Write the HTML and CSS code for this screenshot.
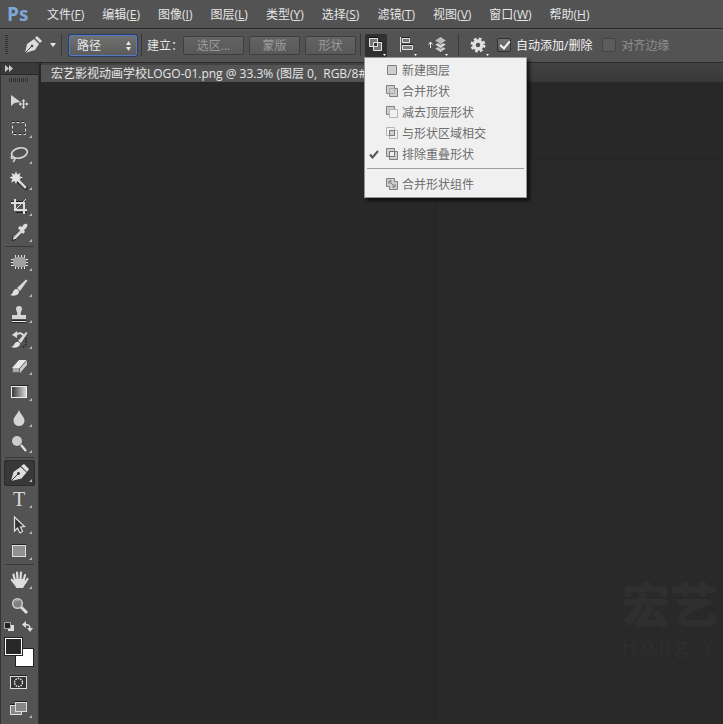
FILE: index.html
```
<!DOCTYPE html>
<html lang="zh-CN">
<head>
    <meta charset="UTF-8">
    <meta name="viewport" content="width=device-width, initial-scale=1.0">
    <title>Photoshop</title>
    <link rel="stylesheet" href="styles.css">
</head>
<body>
<header class="menubar">
    <span class="logo">Ps</span>
    <nav class="menus">
        <a href="#">文件(<u>F</u>)</a>
        <a href="#">编辑(<u>E</u>)</a>
        <a href="#">图像(<u>I</u>)</a>
        <a href="#">图层(<u>L</u>)</a>
        <a href="#">类型(<u>Y</u>)</a>
        <a href="#">选择(<u>S</u>)</a>
        <a href="#">滤镜(<u>T</u>)</a>
        <a href="#">视图(<u>V</u>)</a>
        <a href="#">窗口(<u>W</u>)</a>
        <a href="#">帮助(<u>H</u>)</a>
    </nav>
</header>

<div class="options">
    <span class="grip"></span>
    <button type="button" class="preset" aria-label="钢笔">
        <svg width="34" height="20" viewBox="0 0 34 20">
            <path d="M1 18 L3 9 L10 4 L15 9 L11 15 Z" fill="#dcdcdc"/>
            <path d="M11 3 L13 1 L18 6 L16 8 Z" fill="#dcdcdc"/>
            <path d="M1 18 L8 11" stroke="#444" stroke-width="1"/>
            <circle cx="8" cy="11" r="1.3" fill="#444"/>
            <path d="M26 8 h6 l-3 4z" fill="#e8e8e8"/>
        </svg>
    </button>
    <span class="divider"></span>
    <div class="mode">
        <select aria-label="工具模式">
            <option>路径</option>
            <option>形状</option>
            <option>像素</option>
        </select>
        <svg width="7" height="10" viewBox="0 0 7 10"><path d="M1 4 L3.500 0 L6 4z M1 6 h5 L3.500 10z" fill="#e6e6e6"/></svg>
    </div>
    <span class="divider"></span>
    <span class="caption">建立：</span>
    <div class="makers">
        <button type="button" class="wide" disabled>选区...</button>
        <button type="button" disabled>蒙版</button>
        <button type="button" disabled>形状</button>
    </div>
    <span class="divider"></span>
    <div class="combine">
        <button type="button" class="icon-btn pressed" aria-label="路径操作">
            <svg width="22" height="23" viewBox="0 0 22 23">
                <path d="M4 4h9v4h4v9h-9v-4h-4z" fill="#777"/>
                <path d="M4.500 4.500h8v8h-8z M8.500 8.500h8v8h-8z" fill="none" stroke="#e2e2e2"/>
                <path d="M9 9h3v3h-3z" fill="#303030"/>
                <path d="M4 3.500h9M13 7.500h4" stroke="#111"/>
                <path d="M18 20h3l-1.500 2z" fill="#fff"/>
            </svg>
        </button>
        <ul class="popup">
            <li><button type="button"><i></i><svg width="14" height="14" viewBox="0 0 14 14"><path d="M2.500 2.500h9v9h-9z" fill="#cfcfcf" stroke="#808080"/></svg>新建图层</button></li>
            <li><button type="button"><i></i><svg width="14" height="14" viewBox="0 0 14 14"><path d="M1.500 1.500h8v3h3v8h-8v-3h-3z" fill="#cfcfcf" stroke="#808080"/><path d="M4.500 4.500h5v5h-5z" fill="none" stroke="#aaa"/></svg>合并形状</button></li>
            <li><button type="button"><i></i><svg width="14" height="14" viewBox="0 0 14 14"><path d="M1.500 1.500h8v3h-5v5h-3z" fill="#cfcfcf" stroke="#808080"/><path d="M4.500 4.500h8v8h-8z" fill="#f0f0f0" stroke="#b5b5b5"/></svg>减去顶层形状</button></li>
            <li><button type="button"><i></i><svg width="14" height="14" viewBox="0 0 14 14"><path d="M1.500 1.500h8v8h-8z M4.500 4.500h8v8h-8z" fill="none" stroke="#b5b5b5"/><path d="M4.500 4.500h5v5h-5z" fill="#cfcfcf" stroke="#777"/></svg>与形状区域相交</button></li>
            <li><button type="button"><i><svg width="10" height="9" viewBox="0 0 10 9"><path d="M1 4.500 L3.500 7.500 L9 1" fill="none" stroke="#555" stroke-width="2"/></svg></i><svg width="14" height="14" viewBox="0 0 14 14"><path d="M1.500 1.500h8v8h-8z M4.500 4.500h8v8h-8z" fill="#cfcfcf" stroke="#808080"/><path d="M4.500 4.500h5v5h-5z" fill="#f0f0f0" stroke="#777"/></svg>排除重叠形状</button></li>
            <li class="last"><button type="button"><i></i><svg width="14" height="14" viewBox="0 0 14 14"><path d="M1.500 1.500h8v3h3v8h-8v-3h-3z" fill="#cfcfcf" stroke="#808080"/><path d="M4 4l6 6M4 7v-3h3M10 7v3h-3" fill="none" stroke="#777"/></svg>合并形状组件</button></li>
        </ul>
    </div>
    <button type="button" class="icon-btn" aria-label="路径对齐方式">
        <svg width="22" height="23" viewBox="0 0 22 23">
            <path d="M3.500 3v15" stroke="#e2e2e2"/>
            <path d="M5.500 4.500h7v4h-7z M5.500 11.500h10v4h-10z" fill="#777" stroke="#e2e2e2"/>
            <path d="M5 3.500h8M5 10.500h11" stroke="#222"/>
            <path d="M17 20h3l-1.500 2z" fill="#fff"/>
        </svg>
    </button>
    <button type="button" class="icon-btn" aria-label="路径排列方式">
        <svg width="22" height="23" viewBox="0 0 22 23">
            <path d="M3.500 8v6M1.500 10.500l2-2.500l2 2.500" fill="none" stroke="#eee"/>
            <path d="M7.500 14.500l6-3l6 3l-6 4z" fill="#c8c8c8" stroke="#444" stroke-width=".700"/>
            <path d="M7.500 10.500l6-3l6 3l-6 4z" fill="#d5d5d5" stroke="#444" stroke-width=".700"/>
            <path d="M7.500 6.500l6-4l6 4l-6 4z" fill="#bcbcbc" stroke="#444" stroke-width=".700"/>
            <path d="M18 20h3l-1.500 2z" fill="#fff"/>
        </svg>
    </button>
    <span class="divider gear-divider"></span>
    <button type="button" class="icon-btn" aria-label="设置">
        <svg width="22" height="23" viewBox="0 0 22 23">
            <circle cx="10" cy="11" r="4" fill="none" stroke="#e0e0e0" stroke-width="3.500"/>
            <circle cx="10" cy="11" r="6.300" fill="none" stroke="#e0e0e0" stroke-width="2.400" stroke-dasharray="2.700 2.248"/>
            <path d="M18 20h3l-1.500 2z" fill="#fff"/>
        </svg>
    </button>
    <label class="check"><input type="checkbox" checked>自动添加/删除</label>
    <label class="check off"><input type="checkbox" disabled>对齐边缘</label>
</div>

<main class="workspace">
    <aside class="toolbox">
        <div class="toolbox-head">
            <svg width="8" height="7" viewBox="0 0 8 7"><path d="M0 0l4 3.500l-4 3.500z M4 0l4 3.500l-4 3.500z" fill="#ccc"/></svg>
        </div>
        <div class="toolbox-grip"></div>
        <div class="group">
            <button type="button" class="tool" aria-label="移动"><svg width="31" height="26" viewBox="0 0 31 26">
                <path d="M7 5v11l3.500-3l6-1z" fill="#d8d8d8"/>
                <path d="M19.500 10v8M15.500 14h8" stroke="#d8d8d8" stroke-width="1.200"/>
                <path d="M17.500 11.500l2-2.500l2 2.500z M17.500 16.500l2 2.500l2-2.500z M17 12l-2.500 2l2.500 2z M22 12l2.500 2l-2.500 2z" fill="#d8d8d8"/>
            </svg></button>
            <button type="button" class="tool more" aria-label="矩形选框"><svg width="31" height="26" viewBox="0 0 31 26">
                <path d="M8.500 5.500h13v12h-13z" fill="none" stroke="#222" stroke-dasharray="3 2" stroke-dashoffset="1"/>
                <path d="M8.500 6.500h13v12h-13z" fill="none" stroke="#dedede" stroke-dasharray="3 2" stroke-dashoffset="1"/>
            </svg></button>
            <button type="button" class="tool more" aria-label="套索"><svg width="31" height="26" viewBox="0 0 31 26">
                <ellipse cx="15.500" cy="11" rx="8" ry="5" transform="rotate(-14 15.500 11)" fill="none" stroke="#d5d5d5" stroke-width="1.700"/>
                <path d="M8 14c-2 2 0 3 2 2c2 0 1 2-1 4" fill="none" stroke="#d5d5d5" stroke-width="1.400"/>
            </svg></button>
            <button type="button" class="tool more" aria-label="魔棒"><svg width="31" height="26" viewBox="0 0 31 26">
                <path d="M13 12L23 21" stroke="#222" stroke-width="4"/>
                <path d="M13 11L22 20" stroke="#d5d5d5" stroke-width="2.500"/>
                <path d="M12 3l1.200 3.500l3.300-1.500l-1 3.200l3.500 1.300l-3.500 1.500l1 3l-3.300-1l-1.200 3l-1.500-3l-3.500 1.500l1.500-3.500l-3.200-1.500l3.500-1.300l-1.500-3.200l3.500 1.500z" fill="#e2e2e2"/>
            </svg></button>
            <button type="button" class="tool more" aria-label="裁剪"><svg width="31" height="26" viewBox="0 0 31 26">
                <path d="M7 7.500h13M12 18.500h11" fill="none" stroke="#222"/>
                <path d="M7 9h13v11M11 5v11h12" fill="none" stroke="#ddd" stroke-width="2"/>
                <path d="M12 15L22 5" stroke="#ddd"/>
            </svg></button>
            <button type="button" class="tool more" aria-label="吸管"><svg width="31" height="26" viewBox="0 0 31 26">
                <path d="M8 20.500l1-4l8-8l3 3l-8 8z" fill="#bdbdbd" stroke="#222"/>
                <path d="M14 8l2-2l2 1c1-3 4-4 5-3s0 4-3 6l1 2l-2 2z" fill="#ddd"/>
                <path d="M10 19l7-7" stroke="#eee"/>
            </svg></button>
        </div>
        <div class="group">
            <button type="button" class="tool more" aria-label="修补"><svg width="31" height="26" viewBox="0 0 31 26">
                <path d="M11.500 6v14M14.500 6v14M17.500 6v14M20.500 6v14M7 10.500h17M7 13.500h17M7 16.500h17" stroke="#e2e2e2"/>
                <rect x="9" y="8" width="13" height="10" rx="4" fill="#a0a0a0"/>
            </svg></button>
            <button type="button" class="tool more" aria-label="画笔"><svg width="31" height="26" viewBox="0 0 31 26">
                <path d="M13 13L22 4.500l1.500 1L16 16z" fill="#d8d8d8"/>
                <path d="M6 20c4-1 2-5 6-6c3 0 4 3 2 5c-2 2-5 2-8 1z" fill="#e2e2e2"/>
            </svg></button>
            <button type="button" class="tool more" aria-label="仿制图章"><svg width="31" height="26" viewBox="0 0 31 26">
                <path d="M13 14c1-3-1-4-1-6a2.800 2.800 0 0 1 6 0c0 2-2 3-1 6h5v4H8v-4z" fill="#d5d5d5"/>
                <path d="M8 20.500h14" stroke="#eee"/><path d="M8 19.500h14M8 21.500h14" stroke="#222"/>
            </svg></button>
            <button type="button" class="tool more" aria-label="历史记录画笔"><svg width="31" height="26" viewBox="0 0 31 26">
                <path d="M12 8c3-3 7-2 8 2" fill="none" stroke="#ddd" stroke-width="1.800"/>
                <path d="M13 4v7l-5-3z" fill="#ddd"/>
                <path d="M14 14L22 5l1.500 1L17 16z" fill="#d8d8d8"/>
                <path d="M7 20c4-1 3-5 6-5c3 0 4 2 2 4c-2 2-5 2-8 1z" fill="#e2e2e2"/>
                <path d="M22 11v6c-1 3-3 3-5 3" fill="none" stroke="#222" stroke-width="1.500" stroke-dasharray="1.500 1.500"/>
            </svg></button>
            <button type="button" class="tool more" aria-label="橡皮擦"><svg width="31" height="26" viewBox="0 0 31 26">
                <path d="M8 15l7-8h8l-7 8z" fill="#e8e8e8"/>
                <path d="M8 15h8v5H8z" fill="#aaa"/>
                <path d="M16 15l7-8v5l-7 8z" fill="#ccc"/>
                <path d="M8.500 15v4.500h7v-4.500M16 15l7-8" fill="none" stroke="#444" stroke-width=".700"/>
            </svg></button>
            <button type="button" class="tool more" aria-label="渐变"><svg width="31" height="26" viewBox="0 0 31 26">
                <defs><linearGradient id="ramp"><stop offset="0" stop-color="#333"/><stop offset="1" stop-color="#ddd"/></linearGradient></defs>
                <path d="M7 6.500h17" stroke="#222"/>
                <rect x="7.500" y="7.500" width="15" height="11" fill="url(#ramp)" stroke="#eee"/>
            </svg></button>
            <button type="button" class="tool more" aria-label="模糊"><svg width="31" height="26" viewBox="0 0 31 26">
                <path d="M15 5c2 5 5.500 7 5.500 10.500a5.500 5.500 0 0 1-11 0C9.500 12 13 10 15 5z" fill="#d5d5d5"/>
            </svg></button>
            <button type="button" class="tool more" aria-label="减淡"><svg width="31" height="26" viewBox="0 0 31 26">
                <path d="M17 14l5 6" stroke="#e2e2e2" stroke-width="2.300"/>
                <circle cx="13" cy="10" r="5" fill="#ccc"/>
            </svg></button>
        </div>
        <div class="group">
            <button type="button" class="tool more current" aria-label="钢笔"><svg width="31" height="26" viewBox="0 0 31 26">
                <path d="M7 21l2.500-9l7-5l6 5.500l-5 6z" fill="#dedede"/>
                <path d="M17 6l3-2l5 5l-2 3z" fill="#dedede"/>
                <path d="M7 21l7-7" stroke="#333"/><circle cx="14.500" cy="13.500" r="1.400" fill="#333"/>
            </svg></button>
            <button type="button" class="tool more type" aria-label="横排文字"><span>T</span></button>
            <button type="button" class="tool more" aria-label="路径选择"><svg width="31" height="26" viewBox="0 0 31 26">
                <path d="M10.500 5v14l3-3l2.500 5l2.500-1.500l-2-4.500l4-.500z" fill="#333" stroke="#e2e2e2" stroke-width="1.200"/>
            </svg></button>
            <button type="button" class="tool more" aria-label="矩形"><svg width="31" height="26" viewBox="0 0 31 26">
                <path d="M8 6.500h14" stroke="#222"/>
                <rect x="8.500" y="7.500" width="13" height="11" fill="#919191" stroke="#ddd"/>
            </svg></button>
        </div>
        <div class="group">
            <button type="button" class="tool more" aria-label="抓手"><svg width="31" height="26" viewBox="0 0 31 26">
                <path d="M12 20L7 13.500c-1-2 1-2 2-1l2 2z" fill="#ddd"/>
                <path d="M11 14L9.500 7.500M13.500 12L13 5.500M16.500 12L17 5.500M19.500 14L21 8M21 16l2.500-4" stroke="#ddd" stroke-width="2.200" stroke-linecap="round"/>
                <path d="M10 12h10l2 4l-3 5h-7z" fill="#ddd"/>
            </svg></button>
            <button type="button" class="tool" aria-label="缩放"><svg width="31" height="26" viewBox="0 0 31 26">
                <path d="M17 14l6 6" stroke="#ddd" stroke-width="3"/>
                <circle cx="13.500" cy="10.500" r="4.800" fill="#808080" stroke="#ccc" stroke-width="1.500"/>
                <path d="M11 9c1-2 3-2 4-1" fill="none" stroke="#aaa"/>
            </svg></button>
        </div>
        <div class="colour-row">
            <button type="button" aria-label="默认颜色"><svg width="11" height="11" viewBox="0 0 11 11"><path d="M4 4h6v6H4z" fill="#ddd"/><path d="M.500 1.500h6v6h-6z" fill="#222" stroke="#aaa"/></svg></button>
            <button type="button" aria-label="切换颜色"><svg width="11" height="11" viewBox="0 0 11 11"><path d="M3 3.500c4 0 5 1 5 4.500" fill="none" stroke="#ddd" stroke-width="1.500"/><path d="M4 0v7l-4-3.500z M5 7h6l-3 4z" fill="#ddd"/></svg></button>
        </div>
        <div class="swatches">
            <button type="button" class="back" aria-label="背景色"></button>
            <button type="button" class="front" aria-label="前景色"></button>
        </div>
        <button type="button" class="tool" aria-label="快速蒙版"><svg width="31" height="26" viewBox="0 0 31 26">
            <path d="M6 5.500h17" stroke="#222"/>
            <rect x="6.500" y="6.500" width="16" height="12" fill="#333" stroke="#ddd"/>
            <circle cx="14.500" cy="12.500" r="4" fill="none" stroke="#eee" stroke-width="1.400" stroke-dasharray="1.500 1.012"/>
        </svg></button>
        <button type="button" class="tool more" aria-label="屏幕模式"><svg width="31" height="26" viewBox="0 0 31 26">
            <path d="M6 8.500h5M11 5.500h12" stroke="#222"/>
            <rect x="6.500" y="9.500" width="11" height="9" fill="#888" stroke="#ddd"/>
            <rect x="11.500" y="6.500" width="11" height="9" fill="#888" stroke="#ddd"/>
        </svg></button>
    </aside>
    <section class="document">
        <div class="tabs">
            <a href="#" class="tab">宏艺影视动画学校LOGO-01.png @ 33.3% (图层 0, &nbsp;RGB/8#)</a>
        </div>
        <div class="canvas">
            <div class="page">
                <p class="mark">宏艺</p>
                <p class="mark-latin"><span>H</span><span>o</span><span>n</span><span>g</span><span class="word">Y</span></p>
            </div>
        </div>
    </section>
</main>
</body>
</html>
```
FILE: styles.css
```
* {
    box-sizing: border-box;
}

body {
    margin: 0;
    height: 100vh;
    display: flex;
    flex-direction: column;
    overflow: hidden;
    background-color: #282828;
    color: #e6e6e6;
    font-family: "Open Sans", "Noto Sans CJK SC", sans-serif;
    font-size: 12px;
}

button,
select,
input {
    margin: 0;
    padding: 0;
    border: none;
    background: none;
    color: inherit;
    font: inherit;
}

svg {
    display: block;
    flex: none;
}

a {
    color: inherit;
    text-decoration: none;
    white-space: nowrap;
}

/* menu bar */
.menubar {
    flex: none;
    display: flex;
    align-items: center;
    height: 29px;
    padding-left: 7px;
    background-color: #535353;
    border-bottom: 1px solid #282828;
}

.logo {
    width: 40px;
    color: #7ba7d9;
    font-family: "Open Sans", sans-serif;
    font-size: 19px;
    font-weight: bold;
    line-height: 28px;
}

.menus {
    display: flex;
    gap: 18px;
}

/* options bar */
.options {
    flex: none;
    display: flex;
    align-items: center;
    height: 34px;
    padding: 0 0 2px 5px;
    background-color: #535353;
    border-top: 1px solid #5e5e5e;
    border-bottom: 1px solid #282828;
    white-space: nowrap;
}

.grip {
    width: 3px;
    height: 20px;
    margin-right: 16px;
    background: repeating-linear-gradient(#333 0 1px, #535353 1px 2px);
}

.divider {
    width: 1px;
    height: 22px;
    background-color: #383838;
}

.preset {
    width: 37px;
}

.mode {
    position: relative;
    margin: 0 4px 0 7px;
}

.mode select {
    display: block;
    appearance: none;
    width: 68px;
    height: 21px;
    padding-left: 7px;
    border: 1px solid #5579c6;
    border-radius: 2px;
    background: linear-gradient(#707070, #5c5c5c);
    box-shadow: 0 0 0 1px #2c3c5c;
}

.mode svg {
    position: absolute;
    right: 5px;
    top: 6px;
    pointer-events: none;
}

.caption {
    width: 41px;
    padding-left: 5px;
}

.makers {
    display: flex;
    gap: 5px;
    margin-right: 4px;
}

.makers button {
    width: 51px;
    height: 19px;
    border: 1px solid #3e3e3e;
    border-radius: 2px;
    background: linear-gradient(#636363, #595959);
    color: #9a9a9a;
    line-height: 17px;
}

.makers .wide {
    width: 61px;
}

.icon-btn {
    display: block;
    width: 22px;
    height: 23px;
}

.pressed {
    border-radius: 2px;
    background-color: #303030;
}

.combine {
    position: relative;
    margin: 0 10px 0 4px;
}

.icon-btn + .icon-btn {
    margin-left: 8px;
}

.gear-divider {
    margin: 0 9px;
}

.check {
    display: flex;
    align-items: center;
    gap: 5px;
    margin-left: 7px;
    color: #f4f4f4;
}

.check input {
    appearance: none;
    position: relative;
    width: 14px;
    height: 14px;
    border: 1px solid #303030;
    border-radius: 2px;
    background: linear-gradient(#707070, #606060);
}

.check input:checked::after {
    content: "";
    position: absolute;
    left: 4px;
    top: 0;
    width: 4px;
    height: 8px;
    border: solid #f4f4f4;
    border-width: 0 2px 2px 0;
    transform: rotate(40deg);
}

.check.off {
    margin-left: 10px;
    color: #8e8e8e;
}

.off input {
    border-color: #444;
    background: #5c5c5c;
}

/* path operations popup */
.popup {
    position: absolute;
    z-index: 2;
    left: -1px;
    top: 100%;
    width: 163px;
    margin: 0;
    padding: 2px;
    list-style: none;
    background-color: #f0f0f0;
    border: 1px solid #979797;
    box-shadow: 3px 3px 3px rgba(0, 0, 0, .6);
    color: #6d6d6d;
}

.popup button {
    display: flex;
    align-items: center;
    width: 100%;
    height: 21px;
}

.popup i {
    width: 15px;
    padding-left: 2px;
    margin-right: 3px;
}

.popup button > svg {
    margin-right: 3px;
}

.popup .last {
    margin-top: 3px;
    padding-top: 5px;
    border-top: 1px solid #a0a0a0;
}

/* toolbox */
.workspace {
    flex: 1;
    display: flex;
    min-height: 0;
}

.toolbox {
    flex: none;
    width: 39px;
    background-color: #535353;
    border-left: 1px solid #333;
    border-right: 1px solid #333;
    overflow: hidden;
}

.toolbox-head {
    height: 12px;
    padding: 2px 4px;
    background-color: #3a3a3a;
    border-bottom: 1px solid #282828;
}

.toolbox-grip {
    width: 20px;
    height: 4px;
    margin: 3px 8px 8px;
    background: repeating-linear-gradient(90deg, #333 0 1px, #535353 1px 2px);
}

.group {
    margin: 0 3px;
}

.group + .group {
    padding-top: 3px;
    background: linear-gradient(#383838, #383838) 1px 0 / 29px 1px no-repeat;
}

.tool {
    display: block;
    position: relative;
    width: 31px;
    height: 26px;
}

.toolbox > .tool {
    margin-left: 3px;
}

.more::after {
    content: "";
    position: absolute;
    right: 3px;
    bottom: 4px;
    border-top: 3px solid transparent;
    border-right: 3px solid #b8b8b8;
}

.current {
    border-radius: 3px;
    background-color: #383838;
    box-shadow: inset 0 0 0 1px #2a2a2a;
}

.type span {
    display: block;
    width: 30px;
    color: #dcdcdc;
    font-family: "Liberation Serif", serif;
    font-size: 20px;
    line-height: 24px;
}

.colour-row {
    display: flex;
    gap: 7px;
    padding: 2px 3px 0;
    height: 18px;
}

.colour-row button {
    width: 11px;
    height: 11px;
}

.swatches {
    position: relative;
    width: 30px;
    height: 30px;
    margin: 0 0 3px 3px;
}

.swatches button {
    position: absolute;
    width: 19px;
    height: 19px;
    border: 1px solid #222;
}

.swatches .front {
    left: 0;
    top: 0;
    background-color: #282828;
    box-shadow: inset 0 0 0 1px #fff;
}

.swatches .back {
    right: 0;
    bottom: 0;
    background-color: #fff;
}

/* document window */
.document {
    flex: 1;
    display: flex;
    flex-direction: column;
    min-width: 0;
    margin-left: 2px;
}

.tabs {
    flex: none;
    display: flex;
    height: 19px;
    padding-top: 2px;
    background: linear-gradient(#424242, #383838);
}

.tab {
    padding: 0 10px;
    background-color: #535353;
    line-height: 17px;
}

.canvas {
    flex: 1;
    display: flex;
    padding: 76px 0 0 394px;
    background-color: #282828;
}

.page {
    flex: 1;
    padding: 416px 0 0 186px;
    overflow: hidden;
    background-color: #292929;
    border-top: 1px solid #232323;
    border-left: 1px solid #232323;
    white-space: nowrap;
}

.mark,
.mark-latin {
    margin: 0;
    color: #2f2f2f;
}

.mark {
    font-size: 48px;
    font-weight: 900;
    line-height: 60px;
}

.mark-latin {
    display: flex;
    gap: 5px;
    font-size: 20px;
    line-height: 22px;
}

.mark-latin .word {
    margin-left: 10px;
}
```
